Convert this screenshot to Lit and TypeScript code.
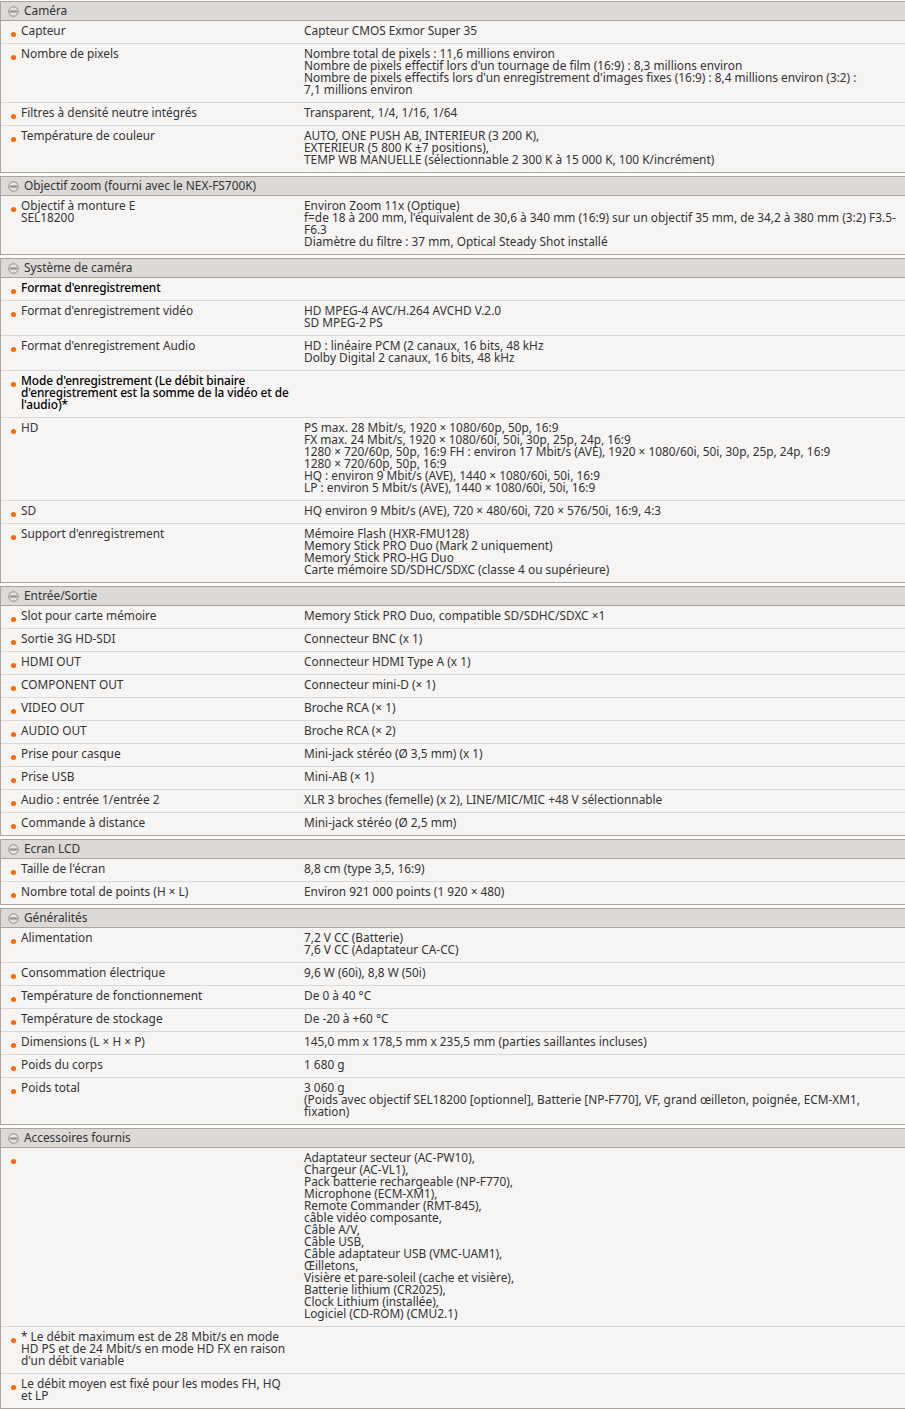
import { LitElement, html, css } from "lit";
import { customElement } from "lit/decorators.js";

type Row = [string, string?, boolean?];
const data: { t: string; r: Row[] }[] = [
  { t: "Caméra", r: [
    ["Capteur", "Capteur CMOS Exmor Super 35"],
    ["Nombre de pixels", "Nombre total de pixels : 11,6 millions environ\nNombre de pixels effectif lors d'un tournage de film (16:9) : 8,3 millions environ\nNombre de pixels effectifs lors d'un enregistrement d'images fixes (16:9) : 8,4 millions environ (3:2) :\n7,1 millions environ"],
    ["Filtres à densité neutre intégrés", "Transparent, 1/4, 1/16, 1/64"],
    ["Température de couleur", "AUTO, ONE PUSH AB, INTERIEUR (3 200 K),\nEXTERIEUR (5 800 K ±7 positions),\nTEMP WB MANUELLE (sélectionnable 2 300 K à 15 000 K, 100 K/incrément)"],
  ]},
  { t: "Objectif zoom (fourni avec le NEX-FS700K)", r: [
    ["Objectif à monture E\nSEL18200", "Environ Zoom 11x (Optique)\nf=de 18 à 200 mm, l'équivalent de 30,6 à 340 mm (16:9) sur un objectif 35 mm, de 34,2 à 380 mm (3:2) F3.5-\nF6.3\nDiamètre du filtre : 37 mm, Optical Steady Shot installé"],
  ]},
  { t: "Système de caméra", r: [
    ["Format d'enregistrement", "", true],
    ["Format d'enregistrement vidéo", "HD MPEG-4 AVC/H.264 AVCHD V.2.0\nSD MPEG-2 PS"],
    ["Format d'enregistrement Audio", "HD : linéaire PCM (2 canaux, 16 bits, 48 kHz\nDolby Digital 2 canaux, 16 bits, 48 kHz"],
    ["Mode d'enregistrement (Le débit binaire\nd'enregistrement est la somme de la vidéo et de\nl'audio)*", "", true],
    ["HD", "PS max. 28 Mbit/s, 1920 × 1080/60p, 50p, 16:9\nFX max. 24 Mbit/s, 1920 × 1080/60i, 50i, 30p, 25p, 24p, 16:9\n1280 × 720/60p, 50p, 16:9 FH : environ 17 Mbit/s (AVE), 1920 × 1080/60i, 50i, 30p, 25p, 24p, 16:9\n1280 × 720/60p, 50p, 16:9\nHQ : environ 9 Mbit/s (AVE), 1440 × 1080/60i, 50i, 16:9\nLP : environ 5 Mbit/s (AVE), 1440 × 1080/60i, 50i, 16:9"],
    ["SD", "HQ environ 9 Mbit/s (AVE), 720 × 480/60i, 720 × 576/50i, 16:9, 4:3"],
    ["Support d'enregistrement", "Mémoire Flash (HXR-FMU128)\nMemory Stick PRO Duo (Mark 2 uniquement)\nMemory Stick PRO-HG Duo\nCarte mémoire SD/SDHC/SDXC (classe 4 ou supérieure)"],
  ]},
  { t: "Entrée/Sortie", r: [
    ["Slot pour carte mémoire", "Memory Stick PRO Duo, compatible SD/SDHC/SDXC ×1"],
    ["Sortie 3G HD-SDI", "Connecteur BNC (x 1)"],
    ["HDMI OUT", "Connecteur HDMI Type A (x 1)"],
    ["COMPONENT OUT", "Connecteur mini-D (× 1)"],
    ["VIDEO OUT", "Broche RCA (× 1)"],
    ["AUDIO OUT", "Broche RCA (× 2)"],
    ["Prise pour casque", "Mini-jack stéréo (Ø 3,5 mm) (x 1)"],
    ["Prise USB", "Mini-AB (× 1)"],
    ["Audio : entrée 1/entrée 2", "XLR 3 broches (femelle) (x 2), LINE/MIC/MIC +48 V sélectionnable"],
    ["Commande à distance", "Mini-jack stéréo (Ø 2,5 mm)"],
  ]},
  { t: "Ecran LCD", r: [
    ["Taille de l'écran", "8,8 cm (type 3,5, 16:9)"],
    ["Nombre total de points (H × L)", "Environ 921 000 points (1 920 × 480)"],
  ]},
  { t: "Généralités", r: [
    ["Alimentation", "7,2 V CC (Batterie)\n7,6 V CC (Adaptateur CA-CC)"],
    ["Consommation électrique", "9,6 W (60i), 8,8 W (50i)"],
    ["Température de fonctionnement", "De 0 à 40 °C"],
    ["Température de stockage", "De -20 à +60 °C"],
    ["Dimensions (L × H × P)", "145,0 mm x 178,5 mm x 235,5 mm (parties saillantes incluses)"],
    ["Poids du corps", "1 680 g"],
    ["Poids total", "3 060 g\n(Poids avec objectif SEL18200 [optionnel], Batterie [NP-F770], VF, grand œilleton, poignée, ECM-XM1,\nfixation)"],
  ]},
  { t: "Accessoires fournis", r: [
    ["", "Adaptateur secteur (AC-PW10),\nChargeur (AC-VL1),\nPack batterie rechargeable (NP-F770),\nMicrophone (ECM-XM1),\nRemote Commander (RMT-845),\ncâble vidéo composante,\nCâble A/V,\nCâble USB,\nCâble adaptateur USB (VMC-UAM1),\nŒilletons,\nVisière et pare-soleil (cache et visière),\nBatterie lithium (CR2025),\nClock Lithium (installée),\nLogiciel (CD-ROM) (CMU2.1)"],
    ["* Le débit maximum est de 28 Mbit/s en mode\nHD PS et de 24 Mbit/s en mode HD FX en raison\nd'un débit variable", ""],
    ["Le débit moyen est fixé pour les modes FH, HQ\net LP", ""],
  ]},
];

@customElement("app-root")
export class AppRoot extends LitElement {
  static styles = css`
    :host { display: block; width: 905px; height: 1409px; overflow: hidden; background: #fff; font-family: "Noto Sans", "Open Sans", sans-serif; font-size: 11.85px; line-height: 12px; color: #333; }
    .wrap { padding-top: 1px; display: flex; flex-direction: column; gap: 3px; }
    .sec { border: 1px solid #aaa49c; border-right: 0; background: #f6f5f4; }
    .head { height: 16px; padding: 0 0 2px 7px; background: #dcd9d6; border-bottom: 1px solid #aaa49c; display: flex; align-items: center; gap: 5px; }
    .head svg { display: block; flex: none; margin-top: 2px; }
    .row { display: grid; grid-template-columns: 303px 1fr; padding: 3px 4px 7px 0; border-top: 1px solid #dcdad8; white-space: pre-line; }
    .head + .row { border-top: 0; }
    .l { padding-left: 20px; position: relative; }
    .l::before { content: ""; position: absolute; left: 10px; top: 8px; width: 5px; height: 5px; border-radius: 50%; background: #f60; }
    .b .l { font-weight: 500; letter-spacing: -0.09px; color: #000; }
  `;
  render() {
    return html`<div class="wrap">${data.map(s => html`
      <section class="sec">
        <div class="head">
          <svg width="11" height="11" viewBox="0 0 11 11"><circle cx="5.5" cy="5.5" r="4.75" fill="#e6e3e0" stroke="#8d8a86"/><rect x="2" y="4.5" width="7" height="2" fill="#8d8a86"/></svg>
          <span>${s.t}</span>
        </div>
        ${s.r.map(r => html`<div class="row ${r[2] ? "b" : ""}"><div class="l">${r[0]}</div><div>${r[1]}</div></div>`)}
      </section>`)}</div>`;
  }
}
